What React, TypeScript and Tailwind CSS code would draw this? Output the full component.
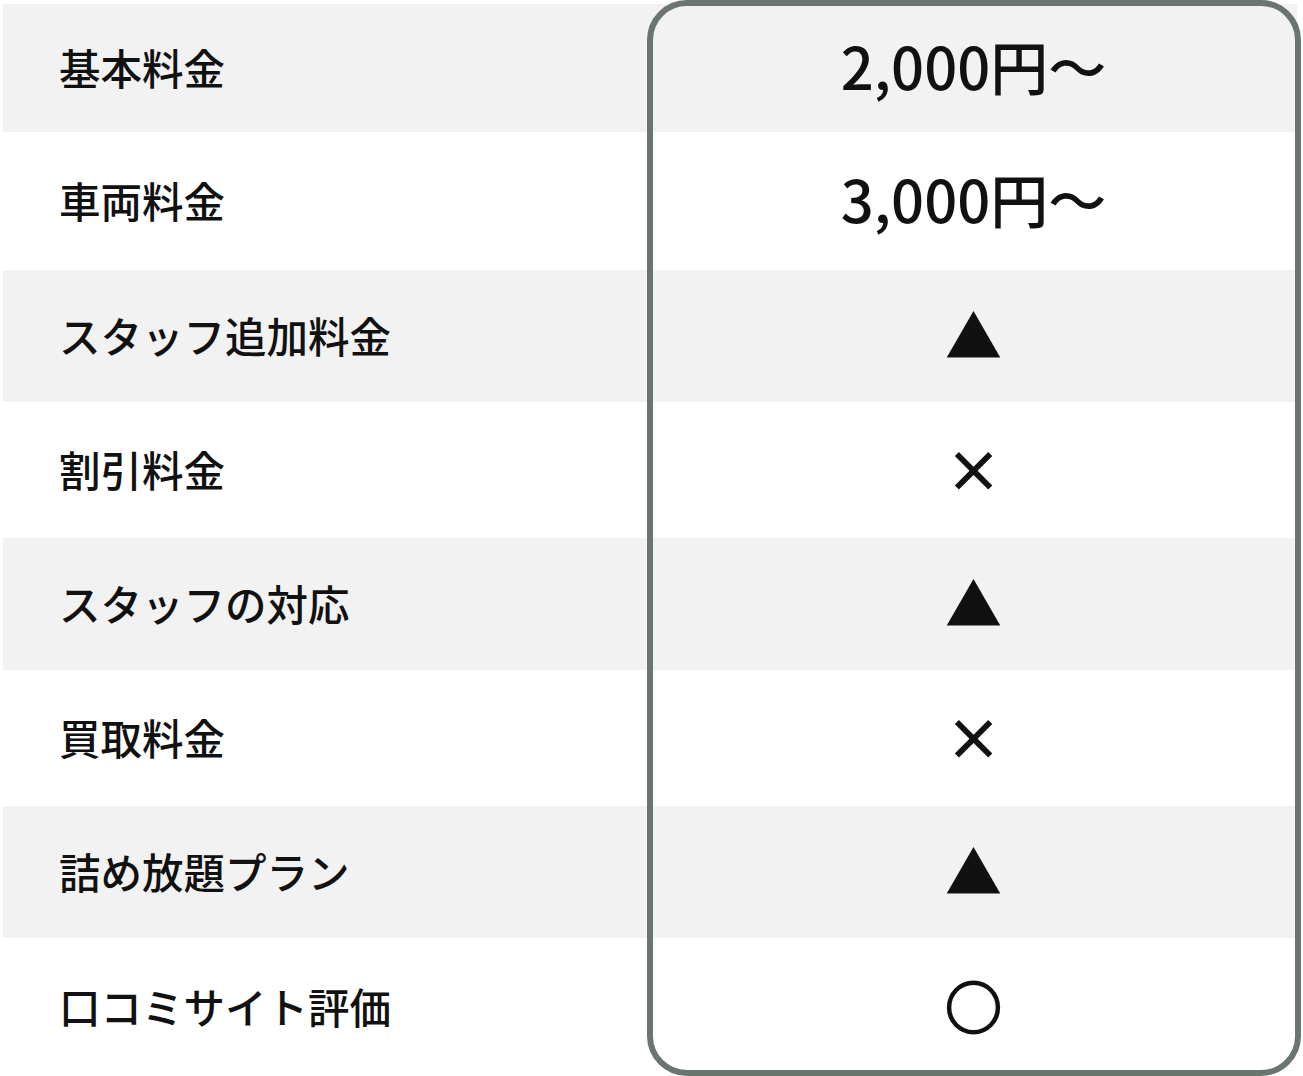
const rows = [
  { label: '基本料金', value: '2,000円〜', kind: 'price', h: 'h-[128px]' },
  { label: '車両料金', value: '3,000円〜', kind: 'price', h: 'h-[138px]' },
  { label: 'スタッフ追加料金', value: '▲', kind: 'mark', h: 'h-[132px]' },
  { label: '割引料金', value: '×', kind: 'mark', h: 'h-[136px]' },
  { label: 'スタッフの対応', value: '▲', kind: 'mark', h: 'h-[132px]' },
  { label: '買取料金', value: '×', kind: 'mark', h: 'h-[136px]' },
  { label: '詰め放題プラン', value: '▲', kind: 'mark', h: 'h-[132px]' },
  { label: '口コミサイト評価', value: '○', kind: 'mark', h: 'h-[138px]' },
];

function markClass(v: string) {
  if (v === '▲') return 'text-[57px] leading-none';
  if (v === '×') return 'text-[57px] font-bold leading-none';
  return 'text-[57px] font-bold leading-none [-webkit-text-stroke:2px_#111]';
}

export default function App() {
  return (
    <main className="min-h-screen bg-white font-['Noto_Sans_CJK_JP','Noto_Sans',sans-serif] text-[#111]">
      <div className="relative pl-[3px] pr-[6px] pt-[4px]">
        {rows.map((row, idx) => (
          <div key={row.label} className={`grid grid-cols-[645px_1fr] ${row.h} ${idx % 2 === 0 ? 'bg-[#f2f2f2]' : 'bg-white'}`}>
            <div className="flex items-center pb-[2px] pl-[56px] text-[41.5px] font-medium">{row.label}</div>
            <div className="flex items-center justify-center pl-[2px]">
              {row.kind === 'price' ? (
                <span className="mb-[6px] text-[58px] font-medium leading-none">{row.value}</span>
              ) : (
                <span className={`mb-[6px] ${markClass(row.value)}`}>{row.value}</span>
              )}
            </div>
          </div>
        ))}
        {/* highlight frame over the second column */}
        <div className="pointer-events-none absolute left-[647px] top-0 h-[1076px] w-[654px] rounded-[40px] border-[6px] border-[#6b7570]" />
      </div>
    </main>
  );
}
